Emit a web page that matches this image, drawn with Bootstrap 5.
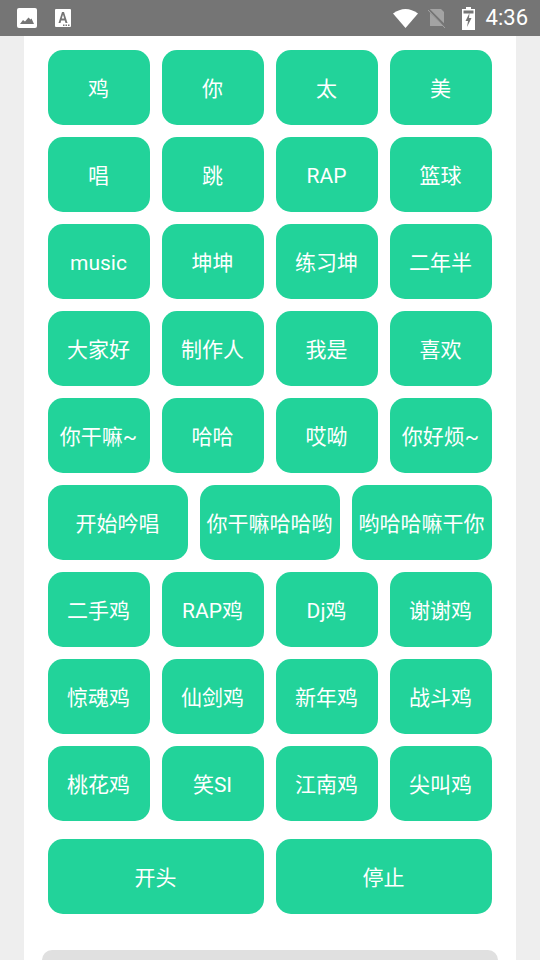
<!DOCTYPE html>
<html lang="zh">
<head>
<meta charset="utf-8">
<title>鸡你太美</title>
<link href="https://cdn.jsdelivr.net/npm/bootstrap@5.3.0/dist/css/bootstrap.min.css" rel="stylesheet">
<style>
html,body{height:960px;overflow:hidden;background:#eeeeee;font-family:Roboto,"Noto Sans CJK SC",sans-serif}
.sbar{height:36px;background:#757575;color:#fff;padding:0 12px 0 17px}
.sbar-time{font-size:22px;line-height:36px;margin-left:11px;font-family:Roboto,sans-serif}
.ico-a{margin-left:18px}
.ico-sim{margin-left:10px}
.ico-bat{margin-left:15px}
.panel-sheet{width:492px;margin:0 auto;height:924px;background:#fff;padding:14px 24px 0}
.key-row{gap:12px;margin-bottom:12px}
.key-row.last-row{margin-top:18px;margin-bottom:36px}
.sound-key{flex:1 1 0;min-width:0;height:75px;background:#22d39a;border:0;border-radius:15px;color:#fff;font-size:21px;line-height:1;padding:4px 1px 0 0;white-space:nowrap;display:flex;align-items:center;justify-content:center}
.sound-key:hover,.sound-key:active{background:#22d39a!important;color:#fff!important}
.grey-box{height:10px;margin:0 -6px;background:#e0e0e0;border-radius:16px 16px 0 0}
</style>
</head>
<body>
<div class="sbar d-flex align-items-center">
  <svg width="20" height="20" viewBox="0 0 20 20"><rect width="20" height="20" rx="2" fill="#fff"/><path d="M3 16l3-4 2 1.500 3.500-4 2 2 1-1 2.500 5.500z" fill="#757575"/></svg>
  <svg class="ico-a" width="16" height="18" viewBox="0 0 16 18"><rect width="16" height="18" rx="1" fill="#fff"/><path d="M3.500 14L7 3h2l3.500 11h-2l-.7-2.500H6.200L5.500 14zM6.800 9.500h2.400L8 5.500z" fill="#757575"/><path d="M8 15.500h1.500V17H8zM10.500 15.500H12V17h-1.500zM13 15.500h1.500V17H13z" fill="#757575"/></svg>
  <div class="ms-auto d-flex align-items-center">
    <svg width="25" height="19" viewBox="0 0 25 19"><path d="M0 4.500Q12.500-4.500 25 4.500L12.500 19z" fill="#fff"/></svg>
    <svg class="ico-sim" width="19" height="19" viewBox="0 0 19 19"><path d="M2 0h11l3 3v14H2z" fill="#a3a3a3"/><path d="M0 0l19 19" stroke="#757575" stroke-width="2.500"/><path d="M0 1l17 18" stroke="#a3a3a3" stroke-width="1"/></svg>
    <svg class="ico-bat" width="13" height="23" viewBox="0 0 13 23"><path d="M4 0h5v2h4v21H0V2h4z" fill="#fff"/><rect x="1.500" y="3.500" width="10" height="3" fill="#757575"/><path d="M7.500 6L3.500 14h2.500l-1 6 4.500-9H7z" fill="#757575"/></svg>
    <span class="sbar-time">4:36</span>
  </div>
</div>
<div class="panel-sheet">
  <div class="d-flex key-row"><button class="btn sound-key">鸡</button><button class="btn sound-key">你</button><button class="btn sound-key">太</button><button class="btn sound-key">美</button></div>
  <div class="d-flex key-row"><button class="btn sound-key">唱</button><button class="btn sound-key">跳</button><button class="btn sound-key">RAP</button><button class="btn sound-key">篮球</button></div>
  <div class="d-flex key-row"><button class="btn sound-key">music</button><button class="btn sound-key">坤坤</button><button class="btn sound-key">练习坤</button><button class="btn sound-key">二年半</button></div>
  <div class="d-flex key-row"><button class="btn sound-key">大家好</button><button class="btn sound-key">制作人</button><button class="btn sound-key">我是</button><button class="btn sound-key">喜欢</button></div>
  <div class="d-flex key-row"><button class="btn sound-key">你干嘛~</button><button class="btn sound-key">哈哈</button><button class="btn sound-key">哎呦</button><button class="btn sound-key">你好烦~</button></div>
  <div class="d-flex key-row"><button class="btn sound-key">开始吟唱</button><button class="btn sound-key">你干嘛哈哈哟</button><button class="btn sound-key">哟哈哈嘛干你</button></div>
  <div class="d-flex key-row"><button class="btn sound-key">二手鸡</button><button class="btn sound-key">RAP鸡</button><button class="btn sound-key">Dj鸡</button><button class="btn sound-key">谢谢鸡</button></div>
  <div class="d-flex key-row"><button class="btn sound-key">惊魂鸡</button><button class="btn sound-key">仙剑鸡</button><button class="btn sound-key">新年鸡</button><button class="btn sound-key">战斗鸡</button></div>
  <div class="d-flex key-row mb-0"><button class="btn sound-key">桃花鸡</button><button class="btn sound-key">笑SI</button><button class="btn sound-key">江南鸡</button><button class="btn sound-key">尖叫鸡</button></div>
  <div class="d-flex key-row last-row"><button class="btn sound-key">开头</button><button class="btn sound-key">停止</button></div>
  <div class="grey-box"></div>
</div>
</body>
</html>
